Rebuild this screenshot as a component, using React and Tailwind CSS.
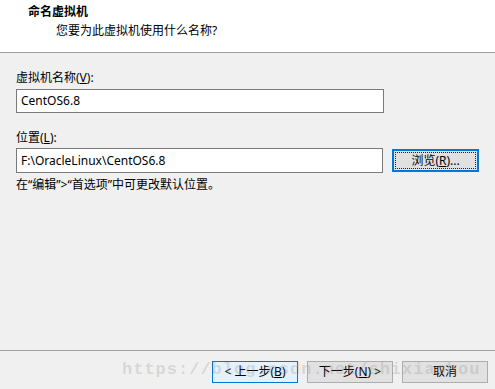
const font = { fontFamily: '"Noto Sans", "Noto Sans CJK SC", sans-serif' };

const WizardButton = ({ children, className = "" }) => (
  <button
    className={`h-[22px] w-[86px] flex items-center justify-center border text-[12px] leading-none text-[#000] ${className}`}
  >
    {children}
  </button>
);

export default function App() {
  return (
    <div
      className="relative w-[495px] h-[389px] bg-[#f0f0f0] flex flex-col overflow-hidden text-[12px] text-black"
      style={font}
    >
      {/* Header */}
      <div className="h-[53px] bg-white border-b border-[#a0a0a0] pt-[4px] shrink-0">
        <div className="pl-[28px] font-bold leading-[16px]">命名虚拟机</div>
        <div className="pl-[56px] mt-[3px] leading-[16px]">您要为此虚拟机使用什么名称?</div>
      </div>

      {/* Body */}
      <div className="flex-1 px-[16px] pt-[17px]">
        <div className="leading-[16px]">
          虚拟机名称(<span className="underline">V</span>):
        </div>
        <div className="mt-[3px] w-[368px] h-[24px] bg-white border border-[#7a7a7a] flex items-center px-[4px] leading-none">
          CentOS6.8
        </div>

        <div className="mt-[17px] leading-[16px]">
          位置(<span className="underline">L</span>):
        </div>
        <div className="mt-[2px] flex items-center">
          <div className="w-[368px] h-[25px] bg-white border border-[#7a7a7a] flex items-center px-[4px] leading-none">
            F:\OracleLinux\CentOS6.8
          </div>
          <button className="ml-[9px] h-[23px] w-[87px] bg-[#e1e1e1] border-2 border-[#0078d7] p-[1px] flex">
            <span className="flex-1 flex items-center justify-center border border-dotted border-[#222] leading-none">
              浏览(<span className="underline">R</span>)...
            </span>
          </button>
        </div>

        <div className="mt-[4px] leading-[16px]">
          在“编辑”&gt;“首选项”中可更改默认位置。
        </div>
      </div>

      {/* Footer */}
      <div className="h-[39px] shrink-0 border-t border-[#a0a0a0] flex justify-end items-start gap-[9px] pt-[10px] pr-[7px]">
        <WizardButton className="bg-[#e5f1fb] border-[#0078d7]">
          &lt; 上一步(<span className="underline">B</span>)
        </WizardButton>
        <WizardButton className="bg-[#e1e1e1] border-[#adadad]">
          下一步(<span className="underline">N</span>) &gt;
        </WizardButton>
        <WizardButton className="bg-[#e1e1e1] border-[#adadad]">取消</WizardButton>
      </div>

      {/* Watermark */}
      <div
        className="absolute left-[122px] top-[360px] pointer-events-none whitespace-nowrap text-[17px] tracking-[1px] font-bold text-[#888]/25 leading-[20px]"
        style={{ fontFamily: '"Liberation Mono", monospace' }}
      >
        https://blog.csdn.net/shixiaohou
      </div>
    </div>
  );
}
